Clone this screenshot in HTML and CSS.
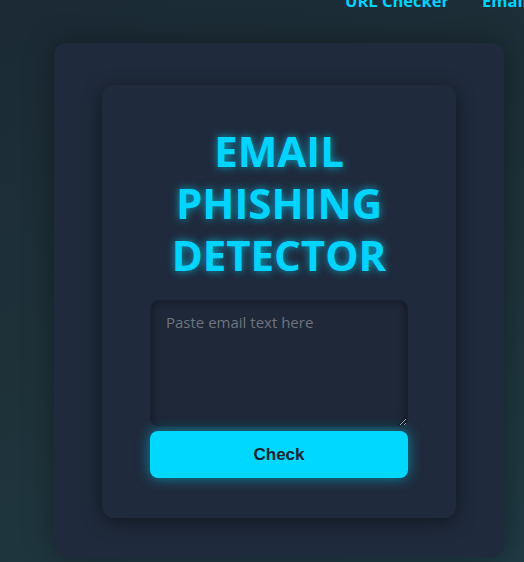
FILE: index.html
```html
<!DOCTYPE html>
<html>
<head>
<meta charset="utf-8">
<link rel="stylesheet" href="styles.css">
</head>
<body>
<nav class="nav">
  <a class="nav-link" href="#">URL Checker</a>
  <a class="nav-link" href="#">Email Checker</a>
</nav>
<main class="outer">
  <section class="card">
    <h1 class="title">EMAIL<br>PHISHING<br>DETECTOR</h1>
    <textarea class="input" placeholder="Paste email text here"></textarea>
    <button class="btn">Check</button>
  </section>
</main>
</body>
</html>
```
FILE: styles.css
```css
html, body {
  margin: 0;
  height: 100%;
}
body {
  background: linear-gradient(160deg, #1b2a35 0%, #1e3139 50%, #203a44 100%);
  font-family: "Open Sans", sans-serif;
  overflow: hidden;
}
.nav {
  display: flex;
  justify-content: flex-start;
  gap: 33px;
  padding-left: 345px;
  margin-top: -10px;
  height: 22px;
  white-space: nowrap;
}
.nav-link {
  color: #00d4ff;
  font-weight: 700;
  font-size: 16.5px;
  line-height: 22px;
  text-decoration: none;
}
.outer {
  margin: 31px 0 0 54px;
  width: 450px;
  height: 514px;
  box-sizing: border-box;
  padding: 42px 48px 0;
  background: #1f2a3c;
  border-radius: 12px;
  box-shadow: 0 0 30px rgba(0, 0, 0, 0.35);
}
.card {
  box-sizing: border-box;
  width: 354px;
  height: 433px;
  padding: 40px 48px;
  background: #1f2a3c;
  border-radius: 12px;
  box-shadow: 0 4px 20px rgba(0, 0, 0, 0.45);
  display: flex;
  flex-direction: column;
}
.title {
  margin: 0 0 19px;
  font-size: 42px;
  line-height: 52px;
  font-weight: 700;
  text-align: center;
  color: #00d4ff;
  text-shadow: 0 0 8px rgba(0, 212, 255, 0.7);
}
.input {
  box-sizing: border-box;
  width: 258px;
  height: 128px;
  padding: 11px 15px;
  background: #1e2839;
  border: 1px solid #1a2231;
  border-radius: 8px;
  box-shadow: inset 0 0 8px rgba(0, 0, 0, 0.45);
  font-family: "Open Sans", sans-serif;
  font-size: 15px;
  color: #ccc;
  outline: none;
  resize: vertical;
}
.input::placeholder {
  color: #6f747c;
}
.btn {
  margin-top: 4px;
  width: 258px;
  height: 47px;
  border: none;
  border-radius: 8px;
  background: #00d8ff;
  color: #1a2230;
  font-family: "Liberation Sans", Arial, sans-serif;
  font-weight: 700;
  font-size: 17px;
  box-shadow: 0 0 14px rgba(0, 216, 255, 0.55);
}
```
